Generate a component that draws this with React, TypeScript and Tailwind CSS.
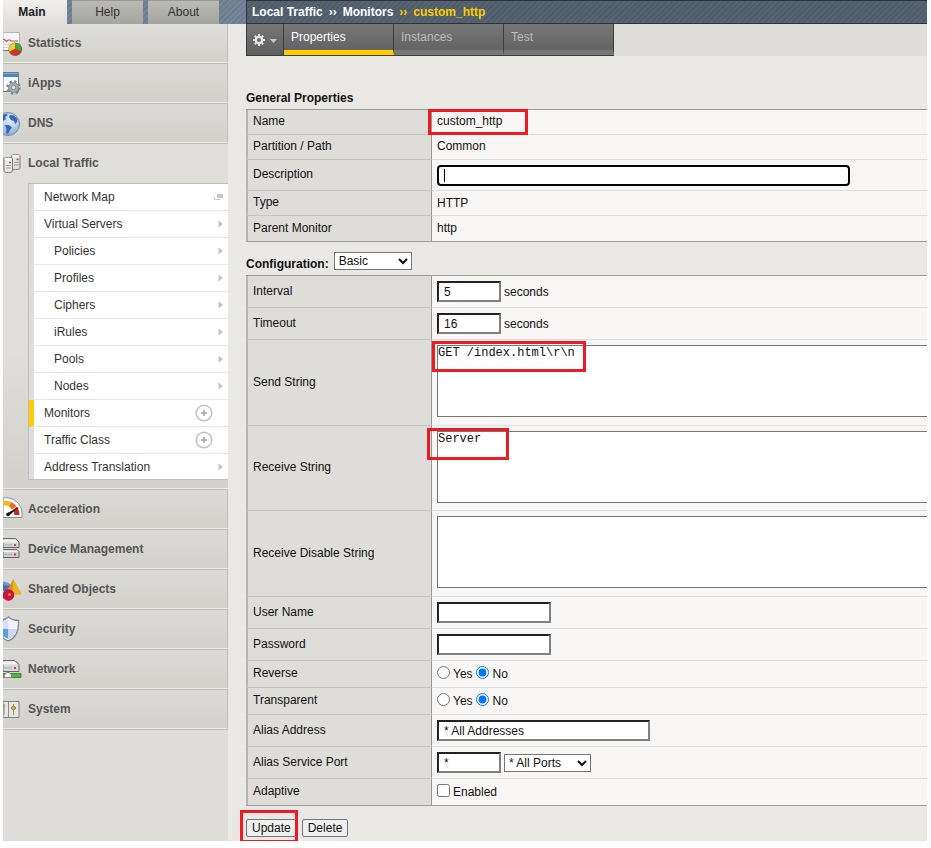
import { useState, type ReactNode } from "react";
import clsx from "clsx";

const SUB_MENU = [
    { label: "Network Map", icon: "window" },
    { label: "Virtual Servers", icon: "arrow" },
    { label: "Policies", icon: "arrow", nested: true },
    { label: "Profiles", icon: "arrow", nested: true },
    { label: "Ciphers", icon: "arrow", nested: true },
    { label: "iRules", icon: "arrow", nested: true },
    { label: "Pools", icon: "arrow", nested: true },
    { label: "Nodes", icon: "arrow", nested: true },
    { label: "Monitors", icon: "plus", active: true },
    { label: "Traffic Class", icon: "plus" },
    { label: "Address Translation", icon: "arrow" },
];

/* ---------- Sidebar icons, all on a 20x28 canvas cut at the left edge ---------- */

function IconCanvas({ children }: { children: ReactNode }) {
    return (
        <svg viewBox="0 0 20 28" className="h-7 w-5 shrink-0" aria-hidden="true">
            {children}
        </svg>
    );
}

function StatisticsIcon() {
    return (
        <IconCanvas>
            <path d="M0 3.5H16.5V21.5H0Z" fill="#f6f6f9" stroke="#b5b5b5" />
            <path d="M0 21.5H15" stroke="#777" />
            <path d="M0 10.5H1.5L3.5 12.5L5 11H7L8 12H15" fill="none" stroke="#c9485a" strokeWidth="1.2" />
            <path d="M0 15.5H6M0 18.5H5" stroke="#d4d4dc" />
            <circle cx="12.3" cy="20.3" r="6.8" fill="#666" />
            <path d="M12 20V14A6 6 0 0 0 6.6 22.8Z" fill="#f2cf2a" />
            <path d="M12 20L6.6 22.8A6 6 0 0 0 17.6 22Z" fill="#dd2a1c" />
            <path d="M12 20V14A6 6 0 0 1 17.8 22Z" fill="#3fa72d" />
        </IconCanvas>
    );
}

function IAppsIcon() {
    return (
        <IconCanvas>
            <path d="M0 3.5H15.5V22.5H0Z" fill="#f7f8fb" stroke="#777" />
            <path d="M0 4H15V8H0Z" fill="#4788ca" />
            <path d="M0 4.5H15" stroke="#79aee2" />
            <circle cx="10.5" cy="18.5" r="6" fill="none" stroke="#7d868c" strokeWidth="2.4" strokeDasharray="2.36 2.35" />
            <circle cx="10.5" cy="18.5" r="5" fill="#a7afb4" stroke="#858d93" />
            <circle cx="10.5" cy="18.5" r="2.2" fill="#e4e7e9" stroke="#78818a" />
        </IconCanvas>
    );
}

function DnsIcon() {
    return (
        <IconCanvas>
            <defs>
                <radialGradient id="globe" cx="0.6" cy="0.35" r="0.7">
                    <stop offset="0" stopColor="#e3efff" />
                    <stop offset="1" stopColor="#83a9dc" />
                </radialGradient>
            </defs>
            <circle cx="5" cy="15" r="11.5" fill="url(#globe)" stroke="#7288ab" />
            <path d="M0 5.5L3 5L5 6L2 8L3 10L0 12Z" fill="#3865ae" />
            <path d="M7 6L11 6.5L14.5 10L14 13L12 15L11 12L8 11L6 8Z" fill="#3865ae" />
            <path d="M2 16L6 16L9 18.5L7 21L5 25L3 24L3.5 20Z" fill="#3865ae" />
        </IconCanvas>
    );
}

function LocalTrafficIcon() {
    return (
        <IconCanvas>
            <path d="M8.5 7C8.5 5 17 5 17 7V19C17 21 8.5 21 8.5 19Z" fill="#e0e0df" stroke="#777" />
            <path d="M1 10C1 8 9.5 8 9.5 10V22C9.5 24 1 24 1 22Z" fill="#e8e8e7" stroke="#777" />
            <path d="M0 8V20" stroke="#888" />
            <ellipse cx="5.2" cy="10" rx="3.8" ry="1.3" fill="#f7f7f7" />
            <ellipse cx="12.8" cy="7" rx="3.8" ry="1.3" fill="#f7f7f7" />
            <path d="M3 16.5H8M3 19H8M11 13.5H16M11 16H16" stroke="#999" />
            <path d="M6 13.5H8M13.5 10.5H15.5" stroke="#d9384c" strokeWidth="1.5" />
        </IconCanvas>
    );
}

function AccelerationIcon() {
    return (
        <IconCanvas>
            <path d="M0 3C10 1 19 9 19 18V22.5H0Z" fill="#fff" stroke="#8b8b8b" />
            <path d="M0 5.5A15 15 0 0 1 8 7L6 11.5A9 9 0 0 0 0 10Z" fill="#f5b51e" />
            <path d="M8 7A15 15 0 0 1 13.5 11L9 14.5A9 9 0 0 0 6 11.5Z" fill="#ef6a17" />
            <path d="M14 11.5A15 15 0 0 1 16.5 20H11.5A10 10 0 0 0 10 15Z" fill="#d31f1b" />
            <path d="M3.5 18.5L16 12L5.5 21Z" fill="#111" />
            <circle cx="5" cy="19.5" r="1.8" fill="#111" />
        </IconCanvas>
    );
}

function DeviceIcon() {
    return (
        <IconCanvas>
            <path d="M0 3.5H12.5L16 7V12.5H0Z" fill="#d6d6d6" stroke="#666" />
            <path d="M0 4.5H12L15 7.5H0Z" fill="#efefef" />
            <path d="M0 14.5H14L16 16.5V22.5H0Z" fill="#cfcfcf" stroke="#666" />
            <path d="M0 15.5H13.5L15 17H0Z" fill="#efefef" />
            <path d="M0 10H9M0 19.5H9" stroke="#aaa" />
            <path d="M11 10H13M11 19.5H13" stroke="#e0384a" strokeWidth="2" />
        </IconCanvas>
    );
}

function SharedIcon() {
    return (
        <IconCanvas>
            <path d="M0 7.5C3 7 6 8 7 10V16H0Z" fill="#456eb5" />
            <path d="M0 7.5C3 7 6 8 7 10L5 11L0 9.5Z" fill="#6f95d1" />
            <path d="M10.5 4L19 19.5L8 20L4.5 15Z" fill="#eeb32c" />
            <path d="M10.5 4L4.5 15L9 20Z" fill="#d2921b" />
            <circle cx="5.5" cy="20" r="5.8" fill="#cf1238" />
            <circle cx="6.5" cy="19.5" r="1.6" fill="#ee7d92" />
        </IconCanvas>
    );
}

function SecurityIcon() {
    return (
        <IconCanvas>
            <path d="M0 4.5C2 4.5 4 3.5 5.5 2C8 4.5 12 5.5 15.5 5.5C16 15 14 22.5 5 26C3 25 1 24 0 22.5Z" fill="#fff" stroke="#808795" strokeWidth="1.3" />
            <path d="M0 6.5L5.5 4.5V14H0Z" fill="#cfe0fa" />
            <path d="M5.5 4.5C8 6.5 11 7.3 14 7.5V14H5.5Z" fill="#f1f2fd" />
            <path d="M0 14H5.5V24C3 23 1 22 0 20.5Z" fill="#5aa2d9" />
            <path d="M5.5 14H14C13 19 10 22.5 5.5 24Z" fill="#d3d4f4" />
        </IconCanvas>
    );
}

function NetworkIcon() {
    return (
        <IconCanvas>
            <path d="M0 5.5H12L16 9.5V16.5H0Z" fill="#d8d8d8" stroke="#666" />
            <path d="M0 6.5H11.5L14.5 9.5H0Z" fill="#f0f0f0" />
            <path d="M0 13H9" stroke="#aaa" />
            <path d="M11 13H13" stroke="#e0384a" strokeWidth="2" />
            <path d="M0 18.5H18V22.5H0Z" fill="#46bf35" stroke="#4b7d44" />
            <path d="M1.5 22.5V19.5L4 17.5H6L8.5 19.5V22.5Z" fill="#f4f4f4" stroke="#888" />
        </IconCanvas>
    );
}

function SystemIcon() {
    return (
        <IconCanvas>
            <path d="M0 6.5H16V22.5H0Z" fill="#e6e6e4" stroke="#808080" />
            <path d="M5.5 7V22" stroke="#8b8b8b" />
            <path d="M10.5 9V20M1 9V20" stroke="#888" />
            <path d="M10.5 10.5L13 13L10.5 15.5L8 13Z" fill="#d3b11d" stroke="#7e7a5e" />
            <path d="M0 10H2.5L1 13L0 12Z" fill="#92aa36" />
        </IconCanvas>
    );
}

function GearIcon() {
    return (
        <svg viewBox="0 0 14 14" className="h-3.5 w-3.5" aria-hidden="true">
            <circle cx="7" cy="7" r="3.2" fill="none" stroke="#e8e8e8" strokeWidth="2.2" />
            <path
                d="M7 1V3M7 11V13M1 7H3M11 7H13M2.8 2.8L4.2 4.2M9.8 9.8L11.2 11.2M2.8 11.2L4.2 9.8M9.8 4.2L11.2 2.8"
                stroke="#e8e8e8"
                strokeWidth="2"
            />
        </svg>
    );
}

function SubMenuIcon({ type }: { type: string }) {
    if (type === "plus") {
        return (
            <svg viewBox="0 0 18 18" className="mr-[15px] h-[18px] w-[18px]" aria-hidden="true">
                <circle cx="9" cy="9" r="7.8" fill="none" stroke="#c2c2c2" strokeWidth="1.5" />
                <path d="M9 6V12M6 9H12" stroke="#b5b5b5" strokeWidth="2" />
            </svg>
        );
    }
    if (type === "window") {
        return (
            <svg viewBox="0 0 9 8" className="mr-[5px] h-2 w-[9px]" aria-hidden="true">
                <path d="M3 1H9V5H3Z" fill="#c6c6c6" />
                <path d="M0.5 3.5V6.5H6" fill="none" stroke="#c6c6c6" />
            </svg>
        );
    }
    return (
        <svg viewBox="0 0 5 8" className="mr-[5px] h-2 w-[5px]" aria-hidden="true">
            <path d="M0.5 0.5L5 4L0.5 7.5Z" fill="#c3c3c3" />
        </svg>
    );
}

/* ---------- Sidebar ---------- */

function MenuItem({ icon, label }: { icon: ReactNode; label: string }) {
    return (
        <a
            href="#"
            className="flex h-10 items-center gap-[5px] border-t border-r border-b border-t-[#bdbdb9] border-r-[#bdbdb9] border-b-[#ebebe8] bg-linear-to-b from-[#dbdad6] to-[#d2d1cc] font-bold text-[#555]"
        >
            {icon}
            {label}
        </a>
    );
}

function Sidebar() {
    return (
        <nav className="w-[225px] grow bg-[#deddd9]">
            <a
                href="#"
                className="flex h-[39px] items-center gap-[5px] border-r border-b border-r-[#bdbdb9] border-b-[#ebebe8] bg-linear-to-b from-[#dfdeda] to-[#d2d1cc] font-bold text-[#555]"
            >
                <StatisticsIcon />
                Statistics
            </a>
            <MenuItem icon={<IAppsIcon />} label="iApps" />
            <MenuItem icon={<DnsIcon />} label="DNS" />

            <div className="border-t border-b border-t-[#bdbdb9] border-b-[#ebebe8] bg-linear-to-b from-[#dfdeda] from-60% to-[#d2d1cc] pb-2">
                <a href="#" className="flex h-[39px] items-center gap-[5px] pb-0.5 font-bold text-[#555]">
                    <LocalTrafficIcon />
                    Local Traffic
                </a>
                <ul className="ml-[25px] border-y border-l border-[#bdbdbd]">
                    {SUB_MENU.map((item) => (
                        <li key={item.label} className="group">
                            <a
                                href="#"
                                className={clsx(
                                    "flex h-[27px] items-center justify-between border-b border-l-[5px] border-b-[#e6e6e6] bg-white text-[#333] group-last:h-[25px] group-last:border-b-0",
                                    item.active ? "border-l-[#fc0]" : "border-l-[#dddddf]",
                                    item.nested ? "pl-5" : "pl-2.5"
                                )}
                            >
                                {item.label}
                                <SubMenuIcon type={item.icon} />
                            </a>
                        </li>
                    ))}
                </ul>
            </div>

            <MenuItem icon={<AccelerationIcon />} label="Acceleration" />
            <MenuItem icon={<DeviceIcon />} label="Device Management" />
            <MenuItem icon={<SharedIcon />} label="Shared Objects" />
            <MenuItem icon={<SecurityIcon />} label="Security" />
            <MenuItem icon={<NetworkIcon />} label="Network" />
            <MenuItem icon={<SystemIcon />} label="System" />
            <div className="border-t border-[#bdbdb9]" />
        </nav>
    );
}

/* ---------- Form parts ---------- */

// Red marker frame, laid over the thing it points at
function Highlight({ className }: { className: string }) {
    return <span className={clsx("pointer-events-none absolute border-[3px] border-[#ed1c24]", className)} />;
}

interface RowProps {
    label: string;
    htmlFor?: string;
    height: string;
    children: ReactNode;
}

function Row({ label, htmlFor, height, children }: RowProps) {
    return (
        <tr className="group">
            <th
                scope="row"
                className={clsx(
                    "w-[186px] border-r border-b border-l-2 border-r-[#999] border-b-[#c5c5c2] border-l-[#b5b5b3] bg-[#deddda] p-0 pb-0.5 pl-[5px] text-left align-middle font-normal group-last:border-b-[#999]",
                    height
                )}
            >
                {htmlFor ? <label htmlFor={htmlFor}>{label}</label> : label}
            </th>
            <td className="relative border-b border-[#dddddb] bg-[#f7f6f4] p-0 pl-[5px] align-middle group-last:border-[#999]">
                {children}
            </td>
        </tr>
    );
}

function PropertyTable({ children }: { children: ReactNode }) {
    return (
        <table className="w-full table-fixed border-separate border-spacing-0 border-t border-[#999]">
            <colgroup>
                <col className="w-[186px]" />
                <col />
            </colgroup>
            <tbody>{children}</tbody>
        </table>
    );
}

const inputClass =
    "block h-[21px] border-2 border-t-[#222] border-r-[#808080] border-b-[#808080] border-l-[#222] bg-white pl-[5px] outline-none";
const selectClass = "h-[18px] border border-[#767676] bg-white outline-none";
const textareaClass =
    "block h-[72px] w-full resize-none border border-r-0 border-[#767676] bg-white font-['Liberation_Mono',monospace] leading-[14px] outline-none";
const buttonClass = "h-[18px] rounded-[2px] border border-[#767676] bg-[#efefef] px-[5px] leading-4";

function YesNo({ name }: { name: string }) {
    return (
        <div className="flex items-center gap-[3px]">
            <label className="flex items-center gap-[3px]">
                <input type="radio" name={name} className="mb-1 h-[13px] w-[13px]" />
                Yes
            </label>
            <label className="flex items-center gap-1">
                <input type="radio" name={name} defaultChecked className="mb-1 h-[13px] w-[13px]" />
                No
            </label>
        </div>
    );
}

function GeneralProperties() {
    return (
        <PropertyTable>
            <Row label="Name" height="h-[25px]">
                <div className="pb-0.5">custom_http</div>
                <Highlight className="top-[-1px] left-[-4px] h-[26px] w-[100px]" />
            </Row>
            <Row label="Partition / Path" height="h-[25px]">
                <div className="pb-0.5">Common</div>
            </Row>
            <Row label="Description" htmlFor="description" height="h-[31px]">
                <div className="relative">
                    <input
                        id="description"
                        className="block h-[21px] w-[413px] max-w-full rounded-[4px] border-2 border-black bg-white pl-[5px] outline-none"
                    />
                    <span className="absolute top-1 left-[7px] h-[13px] w-px bg-black" />
                </div>
            </Row>
            <Row label="Type" height="h-[25px]">HTTP</Row>
            <Row label="Parent Monitor" height="h-[26px]">
                <div className="pb-0.5">http</div>
            </Row>
        </PropertyTable>
    );
}

function Configuration() {
    return (
        <PropertyTable>
            <Row label="Interval" htmlFor="interval" height="h-8">
                <div className="flex items-center gap-[3px]">
                    <input id="interval" defaultValue="5" className={clsx(inputClass, "w-16")} />
                    seconds
                </div>
            </Row>
            <Row label="Timeout" htmlFor="timeout" height="h-8">
                <div className="flex items-center gap-[3px]">
                    <input id="timeout" defaultValue="16" className={clsx(inputClass, "w-16")} />
                    seconds
                </div>
            </Row>
            <Row label="Send String" htmlFor="send" height="h-[86px]">
                <div className="h-[75px]">
                    <textarea id="send" defaultValue="GET /index.html\r\n" className={textareaClass} />
                </div>
                <Highlight className="top-[1px] left-0 h-[31px] w-[154px]" />
            </Row>
            <Row label="Receive String" htmlFor="receive" height="h-[85px]">
                <div className="h-[75px]">
                    <textarea id="receive" defaultValue="Server" className={textareaClass} />
                </div>
                <Highlight className="top-[2px] left-[-5px] h-8 w-[82px]" />
            </Row>
            <Row label="Receive Disable String" htmlFor="disable" height="h-[86px]">
                <div className="h-[75px]">
                    <textarea id="disable" className={textareaClass} />
                </div>
            </Row>
            <Row label="User Name" htmlFor="user" height="h-8">
                <input id="user" className={clsx(inputClass, "w-[114px]")} />
            </Row>
            <Row label="Password" htmlFor="password" height="h-8">
                <input id="password" type="password" className={clsx(inputClass, "w-[114px]")} />
            </Row>
            <Row label="Reverse" height="h-[27px]">
                <YesNo name="reverse" />
            </Row>
            <Row label="Transparent" height="h-[27px]">
                <YesNo name="transparent" />
            </Row>
            <Row label="Alias Address" htmlFor="alias" height="h-8">
                <input id="alias" defaultValue="* All Addresses" className={clsx(inputClass, "w-[213px]")} />
            </Row>
            <Row label="Alias Service Port" htmlFor="port" height="h-8">
                <div className="flex items-center gap-[3px]">
                    <input id="port" defaultValue="*" className={clsx(inputClass, "w-16")} />
                    <select aria-label="Port list" className={clsx(selectClass, "w-[87px]")}>
                        <option>* All Ports</option>
                    </select>
                </div>
            </Row>
            <Row label="Adaptive" height="h-[27px]">
                <label className="flex items-center gap-[3px]">
                    <input type="checkbox" className="mb-1 h-[13px] w-[13px]" />
                    Enabled
                </label>
            </Row>
        </PropertyTable>
    );
}

const tabClass =
    "w-[110px] border-r border-b-[5px] border-r-[#3c3c3c] px-[7px] text-left leading-[26px]";

export default function App() {
    const [tab, setTab] = useState("Properties");

    return (
        <div className="bg-white pr-1 pl-[3px] font-['Liberation_Sans',sans-serif] text-[12px] leading-4 text-[#111]">
            <div className="flex bg-[#e9e8e4]">
                <div className="flex w-[243px] shrink-0 flex-col">
                    <div className="flex h-6 gap-[5px] bg-[repeating-linear-gradient(135deg,#75869a_0px,#75869a_2px,#6b7c8f_2px,#6b7c8f_4px)]">
                        <button className="w-16 bg-linear-to-b from-[#f0efec] to-[#e0dfdb] pr-1.5 font-bold text-[#222]">Main</button>
                        <button className="w-[71px] border-t border-[#999] bg-linear-to-b from-[#b9b9b5] to-[#a5a5a0] pb-0.5 text-[#333]">Help</button>
                        <button className="w-[71px] border-t border-[#999] bg-linear-to-b from-[#b9b9b5] to-[#a5a5a0] pb-0.5 text-[#333]">About</button>
                    </div>
                    <Sidebar />
                </div>

                <main className="min-w-0 flex-1">
                    <div className="flex h-6 items-center gap-1.5 border-y border-l border-[#2f3338] bg-[repeating-linear-gradient(135deg,#4f5c69_0px,#4f5c69_2px,#566370_2px,#566370_4px)] pl-[5px] font-bold text-white">
                        <a href="#">Local Traffic</a>
                        <span>››</span>
                        <a href="#">Monitors</a>
                        <span className="text-[#fc0]">››</span>
                        <span className="text-[#fc0]">custom_http</span>
                    </div>

                    <div className="flex h-8 bg-[#deddd9]">
                        <div className="flex border-b border-l border-[#3c3c3c] bg-linear-to-b from-[#777] to-[#5f5f5f]">
                            <button aria-label="Options" className="flex w-[37px] items-center gap-1 border-r border-[#3c3c3c] pl-[5px]">
                                <GearIcon />
                                <svg viewBox="0 0 7 4" className="mt-[3px] h-1 w-[7px]" aria-hidden="true">
                                    <path d="M0 0H7L3.5 4Z" fill="#ccc" />
                                </svg>
                            </button>
                            {["Properties", "Instances", "Test"].map((name) => (
                                <button
                                    key={name}
                                    onClick={() => setTab(name)}
                                    className={clsx(
                                        tabClass,
                                        tab === name ? "border-b-[#fc0] text-white" : "border-b-[#777] text-[#bbb]"
                                    )}
                                >
                                    {name}
                                </button>
                            ))}
                        </div>
                    </div>

                    <h2 className="pt-[34px] pb-[3px] font-bold">General Properties</h2>
                    <GeneralProperties />

                    <div className="flex gap-[5px] pt-2.5 pb-[3px]">
                        <label htmlFor="mode" className="pt-1 font-bold">Configuration:</label>
                        <select id="mode" className={clsx(selectClass, "w-[78px]")}>
                            <option>Basic</option>
                            <option>Advanced</option>
                        </select>
                    </div>
                    <Configuration />

                    <div className="flex gap-[5px] pt-[13px] pb-1">
                        <div className="relative flex">
                            <button className={buttonClass}>Update</button>
                            <Highlight className="top-[-9px] left-[-6px] h-[33px] w-[58px]" />
                        </div>
                        <button className={buttonClass}>Delete</button>
                    </div>
                </main>
            </div>
        </div>
    );
}
